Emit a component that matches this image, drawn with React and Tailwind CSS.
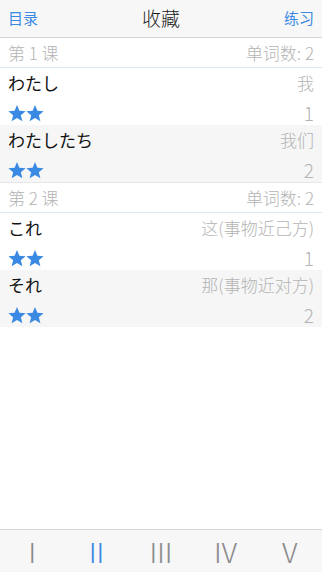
import React from 'react';

const lessons = [
  {
    title: '第 1 课',
    count: 2,
    words: [
      { kana: 'わたし', meaning: '我' },
      { kana: 'わたしたち', meaning: '我们' },
    ],
  },
  {
    title: '第 2 课',
    count: 2,
    words: [
      { kana: 'これ', meaning: '这(事物近己方)' },
      { kana: 'それ', meaning: '那(事物近对方)' },
    ],
  },
];

const tabs = ['Ⅰ', 'Ⅱ', 'Ⅲ', 'Ⅳ', 'Ⅴ'];

const Star = () => (
  <svg width="18" height="18" viewBox="0 0 24 24" className="fill-[#3a8ae4]">
    <path d="M12 1.2l3.2 7.7 8.3.6-6.4 5.4 2.1 8.1L12 18.5 4.8 23l2.1-8.1L.5 9.5l8.3-.6z" />
  </svg>
);

const App = () => {
  return (
    <div
      className="flex h-[572px] w-[322px] flex-col bg-white"
      style={{ fontFamily: '"Noto Sans CJK SC", "Noto Sans CJK JP", sans-serif' }}
    >
      <header className="flex h-[38px] shrink-0 items-center justify-between border-b border-[#d4d4d4] bg-[#f7f7f7] px-2">
        <span className="text-[15px] text-[#3a8ae4]">目录</span>
        <span className="text-[19px] font-light text-[#1a1a1a]">收藏</span>
        <span className="text-[15px] text-[#3a8ae4]">练习</span>
      </header>

      <div className="flex-1">
        {lessons.map((lesson, li) => (
          <section key={lesson.title}>
            <div
              className={
                li === 0
                  ? 'flex h-[30px] items-center justify-between border-b border-[#dce9f3] px-2 text-[17px] font-light text-[#b4b4b4]'
                  : 'flex h-[31px] items-center justify-between border-t border-b border-t-[#e6e6e6] border-b-[#dce9f3] px-2 text-[17px] font-light text-[#b4b4b4]'
              }
            >
              <span>{lesson.title}</span>
              <span>单词数: {lesson.count}</span>
            </div>
            {lesson.words.map((word, wi) => (
              <div
                key={word.kana}
                className={`flex h-[57px] flex-col px-2 pt-[4px] ${wi % 2 ? 'bg-[#f6f6f6]' : 'bg-white'}`}
              >
                <div className="flex h-[22px] items-center justify-between">
                  <span
                    className="text-[17px] text-[#111]"
                    style={{ fontFamily: '"Noto Sans CJK JP", sans-serif' }}
                  >
                    {word.kana}
                  </span>
                  <span className="text-[17px] font-light text-[#b4b4b4]">{word.meaning}</span>
                </div>
                <div className="mt-[8px] flex h-[22px] items-center justify-between">
                  <div className="flex">
                    <Star />
                    <Star />
                  </div>
                  <span className="text-[19px] font-light text-[#b4b4b4]">{wi + 1}</span>
                </div>
              </div>
            ))}
          </section>
        ))}
      </div>

      <nav className="grid h-[43px] shrink-0 grid-cols-5 border-t border-[#d4d4d4] bg-[#f7f7f7]">
        {tabs.map((tab, i) => (
          <div
            key={tab}
            className={`flex items-center justify-center text-[28px] font-light ${i === 1 ? 'text-[#3a8ae4]' : 'text-[#8c8c8c]'}`}
          >
            {tab}
          </div>
        ))}
      </nav>
    </div>
  );
};

export default App;
